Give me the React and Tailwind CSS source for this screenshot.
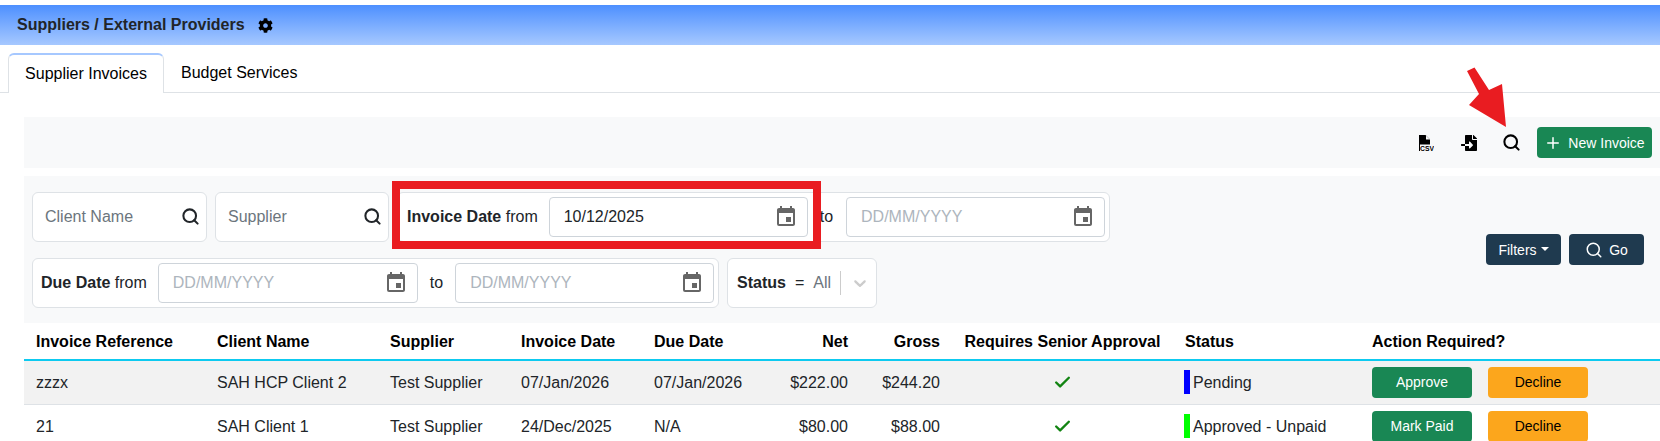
import React from 'react';
import { FaCog, FaFileImport } from 'react-icons/fa';
import { MdEvent } from 'react-icons/md';
import { Plus, Search, Check } from 'lucide-react';

const rows = [
  {
    ref: 'zzzx',
    client: 'SAH HCP Client 2',
    invoiceDate: '07/Jan/2026',
    dueDate: '07/Jan/2026',
    net: '$222.00',
    gross: '$244.20',
    status: 'Pending',
    pill: 'bg-[#0000ff]',
    action: 'Approve',
    rowClass: 'bg-[#f2f2f2]',
  },
  {
    ref: '21',
    client: 'SAH Client 1',
    invoiceDate: '24/Dec/2025',
    dueDate: 'N/A',
    net: '$80.00',
    gross: '$88.00',
    status: 'Approved - Unpaid',
    pill: 'bg-[#00ff00]',
    action: 'Mark Paid',
    rowClass: 'bg-white',
  },
];

const SearchBox = ({ label, width }) => (
  <div className={`flex h-[50px] items-center justify-between rounded-md border border-[#dee2e6] bg-white pl-3 pr-1.5 ${width}`}>
    <span className="text-[#6c757d]">{label}</span>
    <Search size={19} strokeWidth={2.6} className="text-[#212529]" />
  </div>
);

const DateInput = ({ value, width }) => (
  <div className={`flex h-10 items-center justify-between rounded border border-[#ced4da] bg-white pl-[14px] pr-[9px] ${width}`}>
    <span className={`pt-px ${value ? 'text-[#212529]' : 'text-[#adb5bd]'}`}>{value || 'DD/MM/YYYY'}</span>
    <MdEvent size={24} className="text-[#666666]" />
  </div>
);

const App = () => {
  return (
    <div className="relative h-screen overflow-hidden bg-white pt-[5px] font-['Liberation_Sans',Arial,sans-serif] text-base text-[#212529]">
      {/* page title */}
      <div className="flex h-10 items-center gap-[13px] bg-gradient-to-b from-[#4d8fff] to-[#a6c8ff] pl-[17px]">
        <h1 className="text-base font-bold text-[#212529]">Suppliers / External Providers</h1>
        <FaCog size={15} className="text-black" />
      </div>

      {/* tabs */}
      <div className="mt-2 flex h-10 border-b border-[#dee2e6] pl-2">
        <div className="flex h-10 w-[156px] items-center justify-center rounded-t-md border-x border-t-2 border-[#dee2e6] border-t-[#a6c8ff] bg-white text-black">
          Supplier Invoices
        </div>
        <div className="flex h-[39px] items-center pl-[17px] text-black">Budget Services</div>
      </div>

      <div className="ml-6 mt-6">
        {/* toolbar */}
        <div className="flex h-[51px] items-center justify-end bg-[#f8f9fa] pr-2">
          <svg viewBox="0 0 16 16" className="mr-[27px] h-4 w-4">
            <path d="M1 0h6.5L12 4.5V16H1z" fill="#000000" />
            <path d="M8 0.5v4h4" fill="#f8f9fa" />
            <rect x="2" y="9.5" width="14" height="6.5" fill="#f8f9fa" />
            <text x="2" y="15.7" fontSize="6.8" fontWeight="700" fill="#000000" fontFamily="Liberation Sans">CSV</text>
          </svg>
          <FaFileImport size={16} className="mr-[25px] text-black" />
          <Search size={19} strokeWidth={2.6} className="mr-4 text-black" />
          <button className="flex h-[31px] w-[115px] items-center justify-center gap-1.5 rounded bg-[#198754] text-sm text-white">
            <Plus size={18} />
            New Invoice
          </button>
        </div>

        {/* filters */}
        <div className="mt-2 flex h-[147px] items-center justify-between bg-[#f8f9fa] pl-2 pr-4">
          <div className="flex w-[1100px] flex-wrap gap-x-2 gap-y-4">
            <SearchBox label="Client Name" width="w-[175px]" />
            <SearchBox label="Supplier" width="w-[174px]" />
            <div className="flex h-[50px] w-[713px] items-center rounded-md border border-[#dee2e6] bg-white pl-[9px]">
              <span className="mr-[11px]"><b>Invoice Date</b> from</span>
              <DateInput value="10/12/2025" width="w-[259px]" />
              <span className="ml-3 mr-[13px]">to</span>
              <DateInput width="w-[259px]" />
            </div>
            <div className="flex h-[50px] w-[687px] items-center rounded-md border border-[#dee2e6] bg-white pl-2">
              <span className="mr-[11px]"><b>Due Date</b> from</span>
              <DateInput width="w-[260px]" />
              <span className="mx-3">to</span>
              <DateInput width="w-[259px]" />
            </div>
            <div className="flex h-[50px] w-[150px] items-center rounded-md border border-[#dee2e6] bg-white pl-[9px]">
              <b>Status</b>
              <span className="ml-[9px]">=</span>
              <span className="ml-[9px] text-[#6c757d]">All</span>
              <span className="ml-[9px] h-6 w-px bg-[#cccccc]" />
              <svg viewBox="0 0 20 20" className="ml-[9px] h-5 w-5 fill-[#cccccc]">
                <path d="M4.516 7.548c0.436-0.446 1.043-0.481 1.576 0l3.908 3.747 3.908-3.747c0.533-0.481 1.141-0.446 1.574 0 0.436 0.445 0.408 1.197 0 1.615-0.406 0.418-4.695 4.502-4.695 4.502-0.217 0.223-0.502 0.335-0.787 0.335s-0.57-0.112-0.789-0.335c0 0-4.287-4.084-4.695-4.502s-0.436-1.17 0-1.615z" />
              </svg>
            </div>
          </div>
          <div className="flex gap-2 text-sm text-white">
            <button className="flex h-[31px] w-[75px] items-center justify-center gap-1 rounded bg-[#1f3a4f]">
              Filters
              <span className="mb-0.5 border-x-[4px] border-t-[4px] border-x-transparent border-t-white" />
            </button>
            <button className="flex h-[31px] w-[75px] items-center justify-center gap-1.5 rounded bg-[#1f3a4f]">
              <Search size={18} />
              Go
            </button>
          </div>
        </div>

        {/* invoices */}
        <table className="w-full table-fixed border-collapse">
          <colgroup>
            <col className="w-[181px]" />
            <col className="w-[173px]" />
            <col className="w-[131px]" />
            <col className="w-[133px]" />
            <col className="w-[118px]" />
            <col className="w-[100px]" />
            <col className="w-[92px]" />
            <col className="w-[221px]" />
            <col className="w-[187px]" />
            <col />
          </colgroup>
          <thead>
            <tr className="h-[37px] border-b-2 border-[#0dcaf0] text-left font-bold text-black">
              <th className="px-3 pt-0.5">Invoice Reference</th>
              <th className="px-3 pt-0.5">Client Name</th>
              <th className="px-3 pt-0.5">Supplier</th>
              <th className="px-3 pt-0.5">Invoice Date</th>
              <th className="px-3 pt-0.5">Due Date</th>
              <th className="px-3 pt-0.5 text-right">Net</th>
              <th className="px-3 pt-0.5 text-right">Gross</th>
              <th className="whitespace-nowrap px-3 pt-0.5 text-center">Requires Senior Approval</th>
              <th className="px-3 pt-0.5">Status</th>
              <th className="px-3 pt-0.5">Action Required?</th>
            </tr>
          </thead>
          <tbody>
            {rows.map((r) => (
              <tr key={r.ref} className={`h-11 border-b border-[#dee2e6] ${r.rowClass}`}>
                <td className="px-3 pt-0.5">{r.ref}</td>
                <td className="px-3 pt-0.5">{r.client}</td>
                <td className="px-3 pt-0.5">Test Supplier</td>
                <td className="px-3 pt-0.5">{r.invoiceDate}</td>
                <td className="px-3 pt-0.5">{r.dueDate}</td>
                <td className="px-3 pt-0.5 text-right">{r.net}</td>
                <td className="px-3 pt-0.5 text-right">{r.gross}</td>
                <td className="px-3">
                  <Check size={19} strokeWidth={3} className="mx-auto text-[#128412]" />
                </td>
                <td className="px-3">
                  <div className="-ml-px flex items-center gap-[3px]">
                    <span className={`h-6 w-1.5 ${r.pill}`} />
                    <span className="pt-0.5">{r.status}</span>
                  </div>
                </td>
                <td className="px-3">
                  <div className="flex gap-4 text-sm">
                    <button className="h-[31px] w-[100px] rounded bg-[#198754] text-white">{r.action}</button>
                    <button className="h-[31px] w-[100px] rounded bg-[#fca61c] text-black">Decline</button>
                  </div>
                </td>
              </tr>
            ))}
          </tbody>
        </table>
      </div>

      {/* red annotations sitting over the screenshot */}
      <div className="absolute left-[392px] top-[181px] h-[68px] w-[429px] border-8 border-[#e91c21]" />
      <svg className="absolute left-[1460px] top-[65px] h-[70px] w-[50px]" viewBox="0 0 50 70">
        <polygon points="7,6 14.5,2.5 29,25 42,19 46,62 9,40 19,29" fill="#e91c21" />
      </svg>
    </div>
  );
};

export default App;
